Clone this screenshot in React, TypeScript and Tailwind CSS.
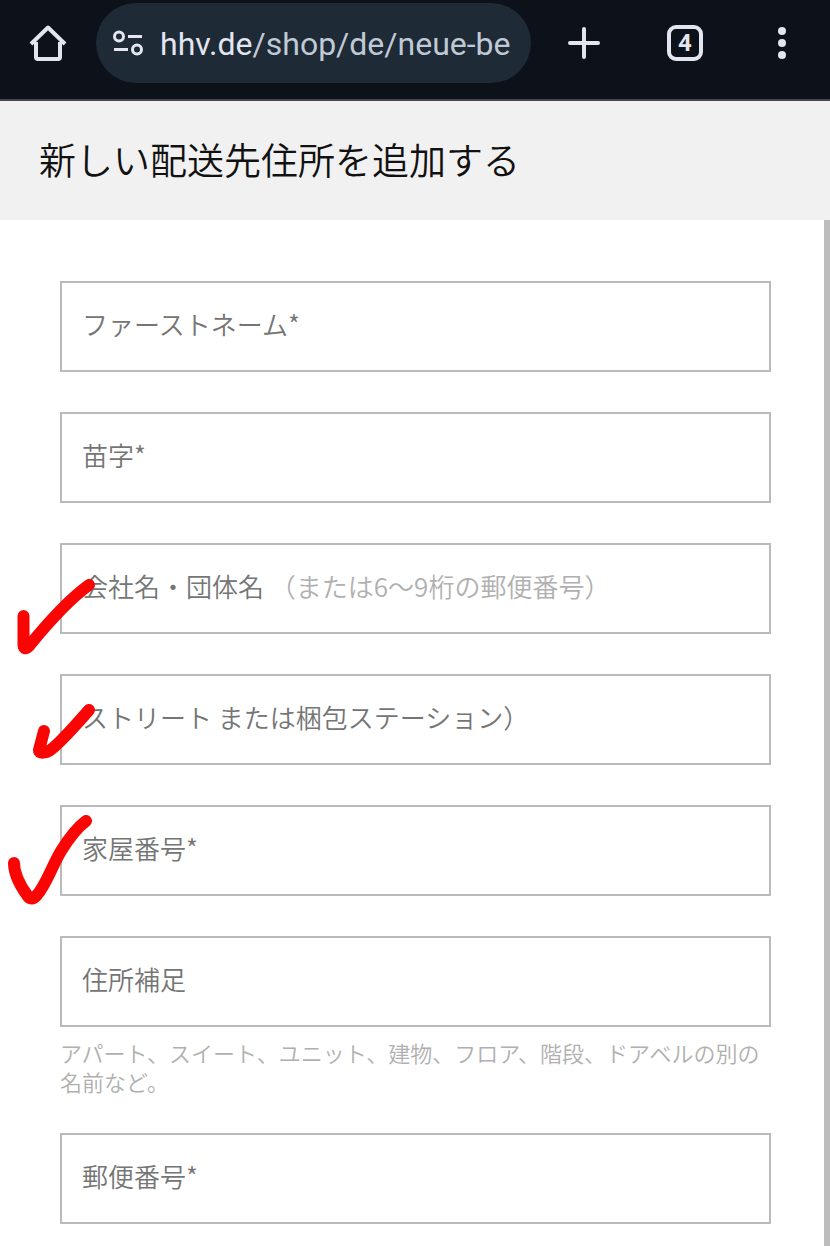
import type { ReactNode } from "react";

interface AddressField {
  id: string;
  label: string;
  note?: string;
  help?: string;
  mark?: ReactNode;
  autoComplete?: string;
}

const strokeProps = {
  fill: "none",
  stroke: "#f90503",
  strokeWidth: 12,
  strokeLinecap: "round",
  strokeLinejoin: "round",
} as const;

// Hand-drawn ticks, each one hangs over the left edge of its field
const CompanyMark = () => (
  <svg
    viewBox="0 0 96 90"
    className="pointer-events-none absolute -left-[50px] top-7 h-[90px] w-24"
    aria-hidden="true"
  >
    <path d="M13.5 45 V74 Q14 80 19 75 Q54 32 79 14" {...strokeProps} />
  </svg>
);

const StreetMark = () => (
  <svg
    viewBox="0 0 96 90"
    className="pointer-events-none absolute -left-[50px] top-7 h-[90px] w-24"
    aria-hidden="true"
  >
    <path d="M34 29 L29 48 Q29 52 37 50 Q45 47 79 8" {...strokeProps} />
  </svg>
);

const HouseMark = () => (
  <svg
    viewBox="0 0 96 110"
    className="pointer-events-none absolute -left-[60px] top-0 h-[110px] w-24"
    aria-hidden="true"
  >
    <path
      d="M14 58 Q14 72 27 90 Q31 97 37 90 C46 80 52 61 61 46 Q74 25 86 16"
      {...strokeProps}
    />
  </svg>
);

const fields: AddressField[] = [
  { id: "first-name", label: "ファーストネーム*", autoComplete: "given-name" },
  { id: "last-name", label: "苗字*", autoComplete: "family-name" },
  {
    id: "company",
    label: "会社名・団体名",
    note: "（または6〜9桁の郵便番号）",
    mark: <CompanyMark />,
  },
  {
    id: "street",
    label: "ストリート または梱包ステーション）",
    mark: <StreetMark />,
  },
  { id: "house-number", label: "家屋番号*", mark: <HouseMark /> },
  {
    id: "addition",
    label: "住所補足",
    help: "アパート、スイート、ユニット、建物、フロア、階段、ドアベルの別の名前など。",
  },
  { id: "zip", label: "郵便番号*", autoComplete: "postal-code" },
];

const Field = ({ id, label, note, help, mark, autoComplete }: AddressField) => (
  <div>
    <div className="relative">
      <input
        id={id}
        name={id}
        type="text"
        placeholder=" "
        autoComplete={autoComplete}
        aria-describedby={help ? `${id}-help` : undefined}
        className="peer block h-[91px] w-full border-2 border-[#bababa] bg-white px-5 text-[26px] text-[#111] outline-none focus:border-[#555]"
      />
      <label
        htmlFor={id}
        className="pointer-events-none absolute inset-y-0 left-[22px] flex items-center whitespace-pre pb-[6px] text-[26px] text-[#757575] peer-[:not(:placeholder-shown)]:hidden"
      >
        {label}
        {note && <span className="text-[#b0b0b0]"> {note}</span>}
      </label>
      {mark}
    </div>
    {help && (
      <p
        id={`${id}-help`}
        className="-mb-[3px] pt-[11px] text-[22px] leading-[29px] text-[#b0b0b0]"
      >
        {help}
      </p>
    )}
  </div>
);

const BrowserBar = () => (
  <nav className="flex h-[101px] items-start border-b-2 border-[#45484d] bg-[#0d1119] pt-[3px] font-[Roboto,sans-serif] font-normal text-[#e3e6f0]">
    <button
      type="button"
      aria-label="ホーム"
      className="flex h-20 w-24 shrink-0 items-center justify-center"
    >
      <svg viewBox="0 0 40 40" className="size-10" fill="none" aria-hidden="true">
        <path
          d="M8 19 V34 Q8 36 10 36 H30 Q32 36 32 34 V19"
          stroke="currentColor"
          strokeWidth="4"
        />
        <path
          d="M3 21 L20 4.5 L37 21"
          stroke="currentColor"
          strokeWidth="4"
          strokeLinejoin="round"
        />
      </svg>
    </button>
    <button
      type="button"
      className="flex h-20 min-w-0 flex-1 items-center gap-4 overflow-hidden rounded-full bg-[#1e2a35] px-4"
    >
      <svg
        viewBox="0 0 32 32"
        className="size-8 shrink-0"
        fill="none"
        stroke="currentColor"
        strokeWidth="3"
        aria-hidden="true"
      >
        <circle cx="7" cy="9.5" r="4.5" />
        <path d="M16 9.5 H30 M2 22.5 H16" />
        <circle cx="25" cy="22.5" r="4.5" />
      </svg>
      <span className="overflow-hidden whitespace-nowrap pt-0.5 text-[32px] text-[#c0c9d6]">
        <span className="text-[#e3e6f0]">hhv.de</span>/shop/de/neue-be
      </span>
    </button>
    <button
      type="button"
      aria-label="新しいタブ"
      className="flex h-20 w-[106px] shrink-0 items-center justify-center"
    >
      <svg viewBox="0 0 34 34" className="size-[34px]" aria-hidden="true">
        <path
          d="M17 3 V31 M3 17 H31"
          stroke="currentColor"
          strokeWidth="4"
          strokeLinecap="round"
        />
      </svg>
    </button>
    <button
      type="button"
      aria-label="タブ 4"
      className="flex h-20 w-24 shrink-0 items-center justify-center"
    >
      <span className="flex size-9 items-center justify-center rounded-[9px] border-4 border-current font-['Liberation_Sans_Narrow',Roboto,sans-serif] text-2xl leading-none font-bold">
        4
      </span>
    </button>
    <button
      type="button"
      aria-label="メニュー"
      className="flex h-20 w-[97px] shrink-0 flex-col items-center justify-center gap-1"
    >
      <span className="size-2 rounded-full bg-current" />
      <span className="size-2 rounded-full bg-current" />
      <span className="size-2 rounded-full bg-current" />
    </button>
  </nav>
);

const App = () => (
  <div
    lang="ja"
    className="flex min-h-screen flex-col bg-white font-['Noto_Sans_CJK_JP',sans-serif] font-[350]"
  >
    <BrowserBar />
    <header className="flex h-[119px] items-center bg-[#f1f1f1] px-[39px] pb-[2px]">
      <h1 className="text-[37px] font-[350] text-[#111]">
        新しい配送先住所を追加する
      </h1>
    </header>
    <main className="flex flex-1">
      <form className="flex min-w-0 flex-1 flex-col gap-10 pt-[61px] pr-[53px] pb-6 pl-[60px]">
        {fields.map((field) => (
          <Field key={field.id} {...field} />
        ))}
      </form>
      <div className="w-[6px] shrink-0 bg-[#bdbdbd]" />
    </main>
  </div>
);

export default App;
